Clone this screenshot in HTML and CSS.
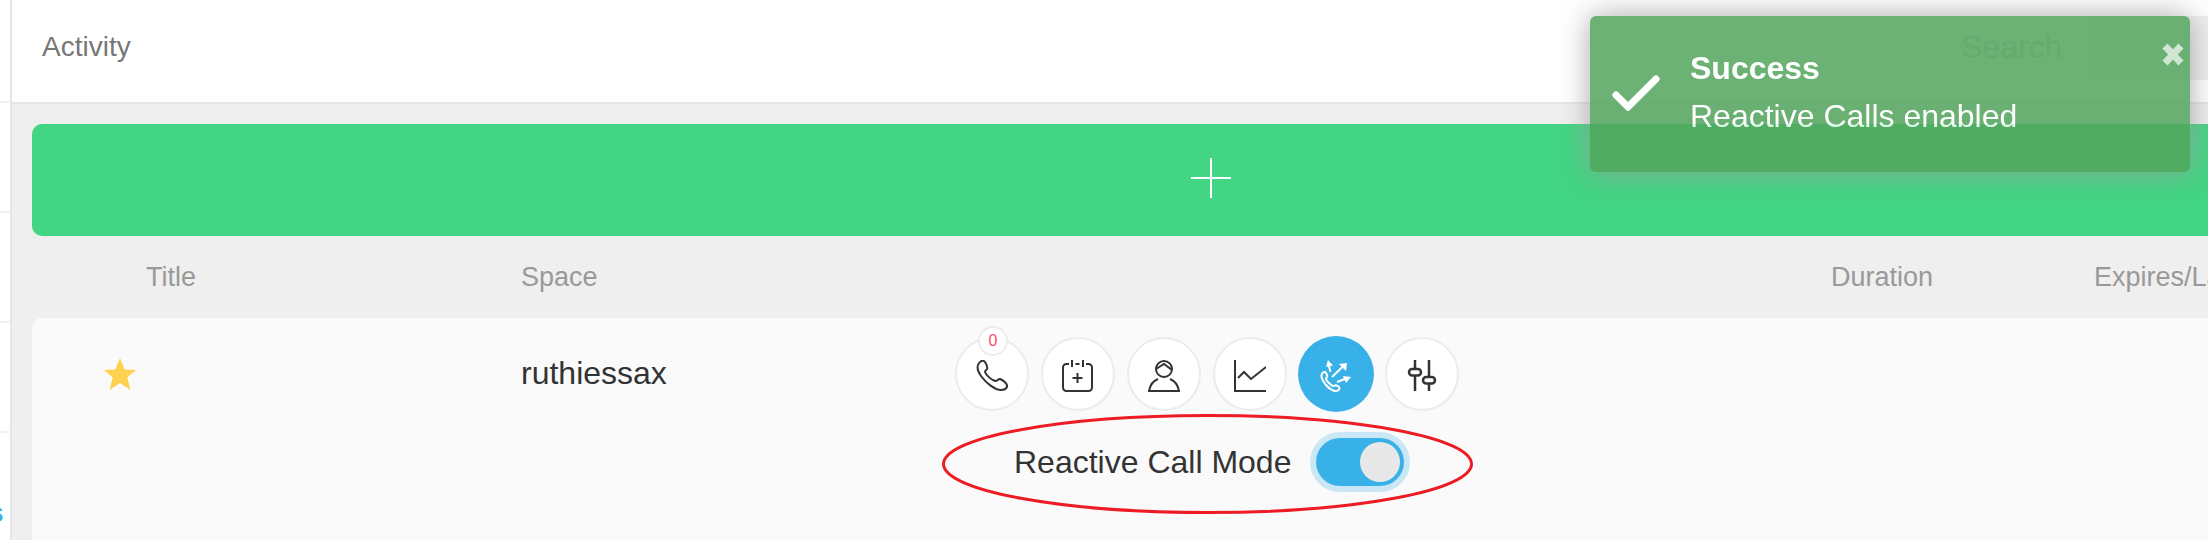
FILE: index.html
```html
<!DOCTYPE html>
<html>
<head>
    <meta charset="UTF-8">
    <title>Activity</title>
    <link rel="stylesheet" href="styles.css">
</head>
<body>
    <div class="page">
        <div class="sidebar">
            <div class="side-item"></div>
            <div class="side-item"></div>
            <div class="side-item"></div>
            <div class="side-item"></div>
            <div class="side-link">s</div>
        </div>
        <div class="main">
            <div class="topbar">
                <div class="topbar-title">Activity</div>
                <div class="search">Search</div>
                <div class="top-btn"></div>
            </div>
            <div class="content">
                <div class="add-bar">
                    <svg class="add-icon" width="40" height="40" viewBox="0 0 40 40">
                        <path d="M20 0v40M0 20h40" fill="none" stroke="#fff" stroke-width="2"></path>
                    </svg>
                </div>
                <div class="table-head">
                    <div class="col-title">Title</div>
                    <div class="col-space">Space</div>
                    <div class="col-duration">Duration</div>
                    <div class="col-expires">Expires/Last</div>
                </div>
                <div class="row">
                    <div class="row-top">
                        <div class="col-star">
                            <svg width="32" height="32" viewBox="0 0 32 32">
                                <path d="M16 0l4.700 11.600 11.300.3-8.700 7.400L26.400 32 16 24.900 5.600 32l3.100-12.700L0 11.900l11.300-.3z" fill="#fed14f"></path>
                            </svg>
                        </div>
                        <div class="col-name">ruthiessax</div>
                        <div class="actions">
                            <div class="action">
                                <span class="badge">0</span>
                                <svg width="32" height="32" viewBox="0 0 32 32">
                                    <path d="M2 5C3 2 6 0 8 1c1.500 1 4 6 3 8-1 1.300-2 2-2 3 1 3 7 9 11 9 1 0 2-2 4-2 3 1 8 5 7 8-1 2-4 3-6 3C19 30 10 23 5 16 2 12 1 8 2 5z" fill="none" stroke="#333" stroke-width="2"></path>
                                </svg>
                            </div>
                            <div class="action">
                                <svg width="32" height="32" viewBox="0 0 32 32">
                                    <path d="M7 4H4.500A3.500 3.500 0 0 0 1 7.500v20A3.500 3.500 0 0 0 4.500 31h22a3.500 3.500 0 0 0 3.500-3.500v-20A3.500 3.500 0 0 0 26.500 4H24M10 0v7M21 0v7M13.500 4h4M15.500 13v10M10.500 18h10" fill="none" stroke="#333" stroke-width="2"></path>
                                </svg>
                            </div>
                            <div class="action">
                                <svg width="32" height="32" viewBox="0 0 32 32">
                                    <circle cx="16" cy="9" r="8" fill="none" stroke="#333" stroke-width="2"></circle>
                                    <path d="M8 9l8-5 8 6M10 19C5 21 2 25 1 31h30c-1-6-4-10-9-12" fill="none" stroke="#333" stroke-width="2"></path>
                                </svg>
                            </div>
                            <div class="action">
                                <svg width="32" height="32" viewBox="0 0 32 32">
                                    <path d="M1 0v31h31M4 18l6-6 7 7L32 7" fill="none" stroke="#333" stroke-width="2"></path>
                                </svg>
                            </div>
                            <div class="action action-on">
                                <svg width="32" height="32" viewBox="0 0 32 32">
                                    <path d="M1.500 15c.6-2 2.300-3.500 3.500-3 1 .5 2.500 3.300 2.200 4.500-.3 1-1.400 1.500-1.200 2.500.4 2 5 6.500 7 7 1 .2 1.800-1 2.800-.8 1.300.3 3.700 1.800 3.700 3 0 1.500-1.800 2.800-3.500 2.800-3 0-7.500-3-10.500-6.500C3 21 .9 17.500 1.500 15zM12 17L25 4.500M10.500 12L8.500 4.500M17 22l9-3.500" fill="none" stroke="#fff" stroke-width="2"></path>
                                    <path d="M27 3l-1 8-7-7zM8 0l5 5.500-7 1.500zM31 17l-5 6-3-7z" fill="#fff"></path>
                                </svg>
                            </div>
                            <div class="action">
                                <svg width="30" height="32" viewBox="0 0 30 32">
                                    <path d="M8 0v9M8 16v15M22 0v17M22 24v7" fill="none" stroke="#333" stroke-width="2.500"></path>
                                    <rect x="2" y="9" width="12" height="6.500" rx="3.250" fill="none" stroke="#333" stroke-width="2.500"></rect>
                                    <rect x="16" y="17" width="12" height="6.500" rx="3.250" fill="none" stroke="#333" stroke-width="2.500"></rect>
                                </svg>
                            </div>
                        </div>
                    </div>
                    <div class="mode">
                        <span class="mode-label">Reactive Call Mode</span>
                        <span class="toggle"><span class="toggle-knob"></span></span>
                        <svg class="mode-ring" width="531" height="102" viewBox="0 0 531 102">
                            <ellipse cx="265.500" cy="51" rx="264" ry="48.500" fill="none" stroke="#ed1c24" stroke-width="3"></ellipse>
                        </svg>
                    </div>
                </div>
            </div>
        </div>
    </div>

    <div class="toast">
        <svg class="toast-check" width="48" height="36" viewBox="0 0 48 36">
            <path d="M4 20l12 12L44 4" fill="none" stroke="#fff" stroke-width="7" stroke-linecap="round"></path>
        </svg>
        <div class="toast-text">
            <div class="toast-title">Success</div>
            <div class="toast-message">Reactive Calls enabled</div>
        </div>
        <svg class="toast-close" width="22" height="23" viewBox="0 0 22 23">
            <path d="M3 3l16 17M19 3L3 20" fill="none" stroke="#fff" stroke-width="7"></path>
        </svg>
    </div>
</body>
</html>
```

FILE: styles.css
```css
html, body {
    margin: 0;
    height: 100%;
    overflow: hidden;
}

body {
    font-family: "Liberation Sans", Arial, sans-serif;
    background-color: #efefef;
    color: #333333;
}

.page {
    display: flex;
    height: 540px;
    width: 2390px;
}

/* left rail, cut off by the window */
.sidebar {
    width: 10px;
    flex-shrink: 0;
    background-color: #ffffff;
    border-right: 2px solid #e6e6e6;
    overflow: hidden;
}

.side-item {
    height: 108px;
    border-bottom: 2px solid #f2f2f2;
}

.side-item:first-child {
    height: 101px;
}

.side-link {
    margin-left: -12px;
    margin-top: 66px;
    font-size: 28px;
    font-weight: bold;
    line-height: 28px;
    color: #38b1e8;
}

.main {
    flex: 1;
    min-width: 0;
}

.topbar {
    height: 102px;
    padding-left: 30px;
    display: flex;
    align-items: center;
    background-color: #ffffff;
    border-bottom: 2px solid #e6e6e6;
}

.topbar-title {
    font-size: 28px;
    color: #777777;
    margin-top: -8px;
    margin-right: auto;
}

.search {
    width: 135px;
    height: 40px;
    box-sizing: border-box;
    padding-left: 21px;
    margin-top: -8px;
    margin-right: 15px;
    border-radius: 20px;
    background-color: #fcfcfc;
    font-size: 32px;
    line-height: 40px;
    color: #d2d2d2;
}

.top-btn {
    width: 300px;
    height: 64px;
    margin-top: -6px;
    background-color: #eeeeee;
}

.content {
    padding: 20px 0 0 20px;
}

.add-bar {
    height: 112px;
    border-radius: 10px;
    background-color: #42d583;
    display: flex;
    align-items: center;
    justify-content: center;
}

.add-icon {
    margin-bottom: 4px;
}

.table-head {
    display: flex;
    height: 82px;
    align-items: center;
    font-size: 27px;
    color: #999999;
}

.col-title {
    width: 489px;
    padding-left: 114px;
    box-sizing: border-box;
}

.col-space {
    width: 1310px;
}

.col-duration {
    width: 263px;
}

.row {
    height: 260px;
    border-radius: 10px 0 0 0;
    background-color: #fafafa;
}

.row-top {
    display: flex;
    align-items: center;
    padding-top: 19px;
}

.col-star {
    width: 489px;
    padding-left: 72px;
    box-sizing: border-box;
    display: flex;
}

.col-name {
    width: 434px;
    margin-top: -2px;
    font-size: 32px;
    color: #333333;
}

.actions {
    display: flex;
    gap: 12px;
}

.action {
    position: relative;
    width: 74px;
    height: 74px;
    box-sizing: border-box;
    padding-top: 4px;
    border: 2px solid #ececec;
    border-radius: 50%;
    background-color: #ffffff;
    display: flex;
    align-items: center;
    justify-content: center;
}

.action-on {
    background-color: #38b1e8;
    border-color: #38b1e8;
    box-shadow: 0 0 0 1px #38b1e8;
}

.badge {
    position: absolute;
    top: -13px;
    left: 21px;
    width: 30px;
    height: 30px;
    box-sizing: border-box;
    border: 2px solid #ececec;
    border-radius: 50%;
    background-color: #ffffff;
    color: #ff4a5f;
    font-size: 16px;
    line-height: 26px;
    text-align: center;
}

.mode {
    position: relative;
    display: flex;
    align-items: center;
    margin-left: 982px;
    width: 420px;
    height: 60px;
    margin-top: 21px;
    gap: 25px;
}

.mode-label {
    font-size: 32px;
    color: #333333;
    white-space: nowrap;
}

.mode-ring {
    position: absolute;
    left: -72px;
    top: -19px;
}

.toggle {
    width: 88px;
    height: 48px;
    border-radius: 24px;
    background-color: #38b1e8;
    box-shadow: 0 0 0 6px rgba(56, 177, 232, 0.25);
    display: flex;
    align-items: center;
    justify-content: flex-end;
    padding-right: 4px;
    box-sizing: border-box;
}

.toggle-knob {
    width: 40px;
    height: 40px;
    border-radius: 50%;
    background-color: #e8e8e8;
}

/* toast floats over the header */
.toast {
    position: fixed;
    top: 16px;
    left: 1590px;
    width: 600px;
    height: 156px;
    box-sizing: border-box;
    padding: 28px 0 0 22px;
    display: flex;
    border-radius: 6px;
    background-color: #52a55c;
    opacity: 0.85;
    box-shadow: 0 0 30px #999999;
    color: #ffffff;
}

.toast-check {
    margin-top: 31px;
    margin-right: 30px;
}

.toast-title {
    font-size: 32px;
    font-weight: bold;
    line-height: 48px;
}

.toast-message {
    font-size: 32px;
    line-height: 48px;
}

.toast-close {
    position: absolute;
    top: 27px;
    right: 6px;
    opacity: 0.7;
}
```
